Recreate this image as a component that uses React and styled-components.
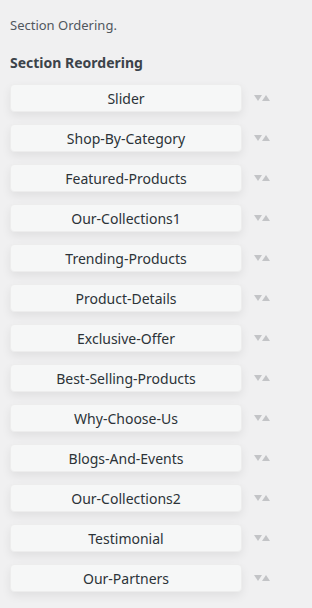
import React from 'react';
import styled, { createGlobalStyle } from 'styled-components';

const sections = [
    'Slider',
    'Shop-By-Category',
    'Featured-Products',
    'Our-Collections1',
    'Trending-Products',
    'Product-Details',
    'Exclusive-Offer',
    'Best-Selling-Products',
    'Why-Choose-Us',
    'Blogs-And-Events',
    'Our-Collections2',
    'Testimonial',
    'Our-Partners',
];

const GlobalStyle = createGlobalStyle`
    html, body {
        margin: 0;
        padding: 0;
        background: #f0f0f1;
        font-family: "Noto Sans", "Open Sans", sans-serif;
    }
`;

const App = () => {
    return (
        <>
            <GlobalStyle />
            <Page>
                <Intro>Section Ordering.</Intro>
                <Title>Section Reordering</Title>
                <List>
                    {sections.map((name) => (
                        <Row key={name}>
                            <SectionBtn>{name}</SectionBtn>
                            <Arrows>
                                <Arrow $dir="down" />
                                <Arrow $dir="up" />
                            </Arrows>
                        </Row>
                    ))}
                </List>
            </Page>
        </>
    );
};

export default App;

const Page = styled.div`
    padding: 16px 10px 20px;
    min-height: 608px;
    box-sizing: border-box;
`;

const Intro = styled.p`
    margin: 0;
    font-size: 13px;
    line-height: 18px;
    color: #50575e;
`;

const Title = styled.h2`
    margin: 19px 0 0;
    font-size: 14px;
    line-height: 20px;
    font-weight: 700;
    color: #3c434a;
`;

const List = styled.ul`
    list-style: none;
    margin: 11px 0 0;
    padding: 0;
    display: flex;
    flex-direction: column;
    gap: 12px;
`;

const Row = styled.li`
    display: flex;
    align-items: center;
    gap: 12px;
`;

const SectionBtn = styled.div`
    width: 232px;
    height: 28px;
    box-sizing: border-box;
    border-radius: 4px;
    background: #f6f7f7;
    border: 1px solid #ededed;
    box-shadow: 0 4px 10px rgba(0, 0, 0, 0.07);
    display: flex;
    align-items: center;
    justify-content: center;
    font-size: 14px;
    color: #2c3338;
`;

const Arrows = styled.div`
    display: flex;
    align-items: center;
    margin-top: 0;
`;

const Arrow = styled.span`
    width: 0;
    height: 0;
    border-left: 4.5px solid transparent;
    border-right: 4.5px solid transparent;
    ${({ $dir }) => $dir === 'down'
        ? 'border-top: 6px solid #c3c4c7;'
        : 'border-bottom: 6px solid #c3c4c7;'}
`;
